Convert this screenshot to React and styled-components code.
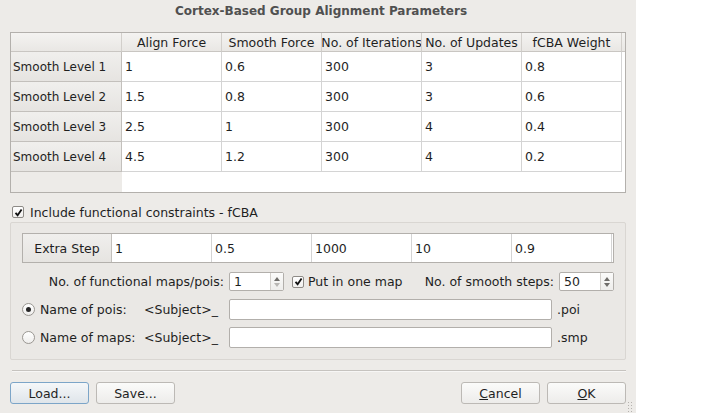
import React from "react";
import styled, { createGlobalStyle } from "styled-components";

const rows = [
  ["Smooth Level 1", "1", "0.6", "300", "3", "0.8"],
  ["Smooth Level 2", "1.5", "0.8", "300", "3", "0.6"],
  ["Smooth Level 3", "2.5", "1", "300", "4", "0.4"],
  ["Smooth Level 4", "4.5", "1.2", "300", "4", "0.2"],
];

const headers = ["Align Force", "Smooth Force", "No. of Iterations", "No. of Updates", "fCBA Weight"];

const extraStep = ["1", "0.5", "1000", "10", "0.9"];

const GlobalStyle = createGlobalStyle`
  html, body {
    margin: 0;
    padding: 0;
    background: #ffffff;
  }
  body {
    font-family: "DejaVu Sans", "Liberation Sans", sans-serif;
    font-size: 12.5px;
    color: #1f1f1f;
  }
`;

const Dialog = styled.div`
  position: relative;
  width: 636px;
  height: 413px;
  background: #edebe8;
  display: flex;
  flex-direction: column;
  overflow: hidden;
`;

const Title = styled.div`
  height: 22px;
  line-height: 22px;
  margin-bottom: 10px;
  padding-left: 6px;
  text-align: center;
  font-size: 12px;
  font-weight: bold;
  color: #505050;
`;

const Table = styled.div`
  margin-left: 10px;
  width: 616px;
  height: 161px;
  box-sizing: border-box;
  border: 1px solid #b3b0ac;
  background: #ffffff;
  display: grid;
  grid-template-columns: 111px repeat(5, 100px) 1fr;
  grid-template-rows: 19px repeat(4, 30px) 1fr;
`;

const HeaderCell = styled.div`
  box-sizing: border-box;
  display: flex;
  align-items: center;
  justify-content: center;
  overflow: hidden;
  white-space: nowrap;
  background: linear-gradient(#f4f3f1, #e9e7e4);
  border-bottom: 1px solid #c9c6c2;
  border-right: ${(p) => (p.$last ? "none" : "1px solid #d2cfcb")};
`;

const RowHead = styled.div`
  box-sizing: border-box;
  display: flex;
  align-items: center;
  justify-content: ${(p) => (p.$center ? "center" : "flex-start")};
  padding-left: ${(p) => (p.$center ? "0" : "2px")};
  font-size: ${(p) => (p.$center ? "12.5px" : "12px")};
  white-space: nowrap;
  background: linear-gradient(#f0efed, #e6e4e1);
  border-right: 1px solid #c3c0bc;
  border-bottom: 1px solid #c3c0bc;
`;

const Cell = styled.div`
  box-sizing: border-box;
  display: flex;
  align-items: center;
  padding-left: 3px;
  white-space: nowrap;
  border-right: 1px solid #d4d4d4;
  border-bottom: 1px solid #d4d4d4;
`;

const Filler = styled.div`
  background: #ffffff;
`;

const EmptyHead = styled.div`
  background: #edebe8;
`;

const CheckRow = styled.label`
  display: flex;
  align-items: center;
  gap: 6px;
  height: 12px;
  margin: 13px 0 4px 12px;
`;

const Box = styled.span`
  box-sizing: border-box;
  width: 12px;
  height: 12px;
  flex: none;
  border: 1px solid #8e8b87;
  border-radius: 2px;
  background: linear-gradient(#ffffff, #f1f0ee);
  display: flex;
  align-items: center;
  justify-content: center;
`;

const Group = styled.div`
  margin-left: 10px;
  width: 616px;
  height: 138px;
  box-sizing: border-box;
  border: 1px solid #d9d6d2;
  border-radius: 2px;
  background: #eae8e5;
  padding: 10px 11px;
  display: flex;
  flex-direction: column;
`;

const ExtraTable = styled.div`
  width: 592px;
  height: 30px;
  box-sizing: border-box;
  border: 1px solid #b3b0ac;
  background: #ffffff;
  display: grid;
  grid-template-columns: 89px repeat(5, 100px) 1fr;
`;

const ExtraCell = styled(Cell)`
  border-bottom: none;
`;

const ExtraHead = styled(RowHead)`
  border-bottom: none;
`;

const SpinRow = styled.div`
  display: flex;
  align-items: center;
  height: 21px;
  margin-top: 8px;
`;

const SpinLabel = styled.span`
  width: 202px;
  padding-right: 5px;
  text-align: right;
  white-space: nowrap;
`;

const Spin = styled.div`
  box-sizing: border-box;
  width: 55px;
  height: 19px;
  border: 1px solid #b2afab;
  border-radius: 2px;
  background: #ffffff;
  display: flex;
`;

const SpinValue = styled.span`
  flex: 1;
  padding-left: 4px;
  line-height: 17px;
`;

const SpinArrows = styled.span`
  width: 12px;
  border-left: 1px solid #d3d0cc;
  background: linear-gradient(#fbfbfa, #eeedeb);
  display: flex;
  flex-direction: column;
  align-items: center;
  justify-content: center;
  gap: 2px;
`;

const Arrow = styled.span`
  width: 0;
  height: 0;
  border-left: 3px solid transparent;
  border-right: 3px solid transparent;
  ${(p) =>
    p.$down
      ? `border-top: 4px solid ${p.$dim ? "#b8b6b3" : "#6f6d6a"};`
      : `border-bottom: 4px solid ${p.$dim ? "#b8b6b3" : "#6f6d6a"};`}
`;

const InlineCheck = styled.span`
  display: flex;
  align-items: center;
  gap: 4px;
  margin-left: 8px;
`;

const RightPart = styled.span`
  margin-left: auto;
  display: flex;
  align-items: center;
  gap: 5px;
`;

const RadioGrid = styled.div`
  display: grid;
  grid-template-columns: 120px 87px 323px auto;
  grid-auto-rows: 21px;
  row-gap: 7px;
  margin-top: 7px;
  align-items: center;
`;

const RadioLabel = styled.span`
  display: flex;
  align-items: center;
  gap: 5px;
  white-space: nowrap;
`;

const Radio = styled.span`
  box-sizing: border-box;
  width: 13px;
  height: 13px;
  border-radius: 50%;
  border: 1px solid #9a9792;
  background: linear-gradient(#ffffff, #efeeec);
  display: flex;
  align-items: center;
  justify-content: center;
  &::after {
    content: "";
    width: 5px;
    height: 5px;
    border-radius: 50%;
    background: ${(p) => (p.$on ? "#262626" : "transparent")};
  }
`;

const Subject = styled.span`
  padding-left: 2px;
  white-space: nowrap;
`;

const Input = styled.div`
  box-sizing: border-box;
  height: 21px;
  border: 1px solid #b2afab;
  border-radius: 2px;
  background: #ffffff;
`;

const Suffix = styled.span`
  padding-left: 5px;
`;

const Separator = styled.div`
  margin: 10px 10px 0 12px;
  height: 1px;
  background: #c6c3bf;
  border-bottom: 1px solid #f7f6f5;
`;

const ButtonRow = styled.div`
  display: flex;
  gap: 7px;
  margin: 10px 10px 0 10px;
`;

const Button = styled.button`
  box-sizing: border-box;
  width: 79px;
  height: 22px;
  padding: 0;
  font-family: inherit;
  font-size: 12.5px;
  color: #1f1f1f;
  border-radius: 3px;
  border: 1px solid ${(p) => (p.$focus ? "#7ca5c8" : "#bcb9b5")};
  background: ${(p) =>
    p.$focus
      ? "linear-gradient(#f5f7f9, #dfe5ea)"
      : "linear-gradient(#fbfbfa, #edecea)"};
  margin-left: ${(p) => (p.$push ? "auto" : "0")};
`;

const Grip = styled.div`
  position: absolute;
  right: 2px;
  bottom: 1px;
  width: 7px;
  height: 11px;
  background-image: radial-gradient(#b5b2ae 0.8px, transparent 1px);
  background-size: 3px 3px;
`;

const Check = () => (
  <svg width="9" height="9" viewBox="0 0 9 9">
    <path d="M1.5 4.8 L3.6 7.2 L7.6 1.4" fill="none" stroke="#111" strokeWidth="1.8" />
  </svg>
);

const SpinBox = ({ value, dimDown }) => (
  <Spin>
    <SpinValue>{value}</SpinValue>
    <SpinArrows>
      <Arrow />
      <Arrow $down $dim={dimDown} />
    </SpinArrows>
  </Spin>
);

const App = () => (
  <>
    <GlobalStyle />
    <Dialog>
      <Title>Cortex-Based Group Alignment Parameters</Title>
      <Table>
        <HeaderCell />
        {headers.map((h) => (
          <HeaderCell key={h}>{h}</HeaderCell>
        ))}
        <HeaderCell $last />
        {rows.map((r) => (
          <React.Fragment key={r[0]}>
            <RowHead>{r[0]}</RowHead>
            {r.slice(1).map((v, i) => (
              <Cell key={i}>{v}</Cell>
            ))}
            <Filler />
          </React.Fragment>
        ))}
        <EmptyHead />
        <Filler style={{ gridColumn: "2 / -1" }} />
      </Table>
      <CheckRow>
        <Box>
          <Check />
        </Box>
        Include functional constraints - fCBA
      </CheckRow>
      <Group>
        <ExtraTable>
          <ExtraHead $center>Extra Step</ExtraHead>
          {extraStep.map((v, i) => (
            <ExtraCell key={i}>{v}</ExtraCell>
          ))}
          <Filler />
        </ExtraTable>
        <SpinRow>
          <SpinLabel>No. of functional maps/pois:</SpinLabel>
          <SpinBox value="1" dimDown />
          <InlineCheck>
            <Box>
              <Check />
            </Box>
            Put in one map
          </InlineCheck>
          <RightPart>
            No. of smooth steps:
            <SpinBox value="50" />
          </RightPart>
        </SpinRow>
        <RadioGrid>
          <RadioLabel>
            <Radio $on />
            Name of pois:
          </RadioLabel>
          <Subject>&lt;Subject&gt;_</Subject>
          <Input />
          <Suffix>.poi</Suffix>
          <RadioLabel>
            <Radio />
            Name of maps:
          </RadioLabel>
          <Subject>&lt;Subject&gt;_</Subject>
          <Input />
          <Suffix>.smp</Suffix>
        </RadioGrid>
      </Group>
      <Separator />
      <ButtonRow>
        <Button $focus>Load...</Button>
        <Button>Save...</Button>
        <Button $push>
          <u>C</u>ancel
        </Button>
        <Button>
          <u>O</u>K
        </Button>
      </ButtonRow>
      <Grip />
    </Dialog>
  </>
);

export default App;
